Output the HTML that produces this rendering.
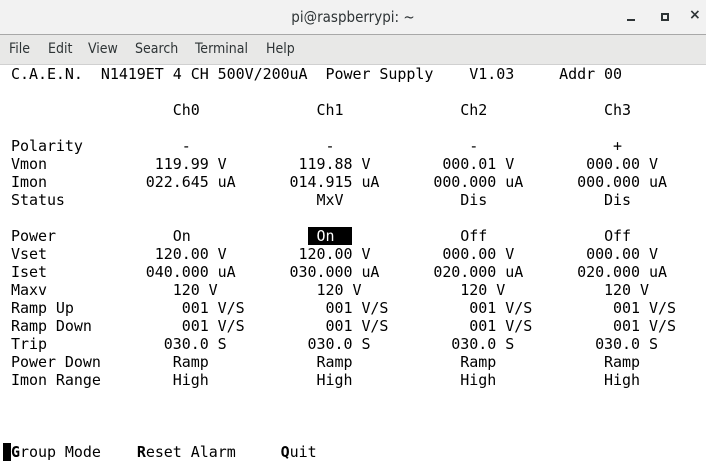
<!DOCTYPE html>
<html><head><meta charset="utf-8"><style>
*{margin:0;padding:0}
body{width:706px;height:472px;overflow:hidden;background:#fff;position:relative;font-family:"Liberation Sans",sans-serif}
#tb{position:absolute;left:0;top:0;width:706px;height:34px;background:#f2f2f2;border-bottom:1px solid #a8a8a8}
#title{position:absolute;left:0;width:706px;top:8px;text-align:center;font-family:"DejaVu Sans Condensed","DejaVu Sans",sans-serif;font-size:15px;color:#2e3436}
#mb{position:absolute;left:0;top:35px;width:706px;height:29px;background:#e8e8e7;border-bottom:1px solid #d0d0d0}
.m{position:absolute;top:41px;font-family:"DejaVu Sans Condensed","DejaVu Sans",sans-serif;font-size:14px;color:#2e3436}
pre{position:absolute;left:11px;top:65px;font-family:"DejaVu Sans Mono",monospace;font-size:15px;letter-spacing:-0.045px;line-height:18px;color:#000}
.hl{background:#000;color:#fff}
#cur{position:absolute;left:3px;top:443px;width:8px;height:18px;background:#000}
</style></head><body>
<div id="tb"><div id="title">pi@raspberrypi: ~</div>
<div style="position:absolute;left:627px;top:19px;width:8px;height:2px;background:#2e3436"></div>
<div style="position:absolute;left:661px;top:13px;width:4px;height:4px;border:2px solid #2e3436"></div>
<div style="position:absolute;left:689px;top:7px;font-size:14px;font-weight:bold;color:#2e3436;font-family:'DejaVu Sans',sans-serif">×</div>
</div>
<div id="mb"></div>
<span class="m" style="left:9px">File</span><span class="m" style="left:48px">Edit</span><span class="m" style="left:88px">View</span><span class="m" style="left:135px">Search</span><span class="m" style="left:195px">Terminal</span><span class="m" style="left:266px">Help</span>
<pre>C.A.E.N.  N1419ET 4 CH 500V/200uA  Power Supply    V1.03     Addr 00

                  Ch0             Ch1             Ch2             Ch3

Polarity           -               -               -               +
Vmon            119.99 V        119.88 V        000.01 V        000.00 V
Imon           022.645 uA      014.915 uA      000.000 uA      000.000 uA
Status                            MxV             Dis             Dis

Power             On             <span class="hl"> On  </span>            Off             Off
Vset            120.00 V        120.00 V        000.00 V        000.00 V
Iset           040.000 uA      030.000 uA      020.000 uA      020.000 uA
Maxv              120 V           120 V           120 V           120 V
Ramp Up            001 V/S         001 V/S         001 V/S         001 V/S
Ramp Down          001 V/S         001 V/S         001 V/S         001 V/S
Trip             030.0 S         030.0 S         030.0 S         030.0 S
Power Down        Ramp            Ramp            Ramp            Ramp
Imon Range        High            High            High            High



<b>G</b>roup Mode    <b>R</b>eset Alarm     <b>Q</b>uit</pre>
<div id="cur"></div>
</body></html>
